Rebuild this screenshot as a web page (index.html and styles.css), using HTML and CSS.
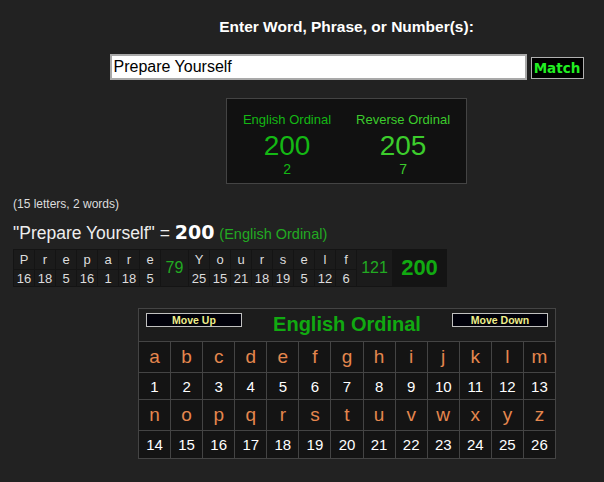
FILE: index.html
```html
<!DOCTYPE html>
<html>
<head>
<meta charset="utf-8">
<link rel="stylesheet" href="styles.css">
</head>
<body>
<div class="center">
  <div class="prompt">Enter Word, Phrase, or Number(s):</div>
  <div class="form-row">
    <input class="phrase" type="text" value="Prepare Yourself">
    <button class="match">Match</button>
  </div>
  <div class="results">
    <div class="res-col eo">
      <div class="res-label">English Ordinal</div>
      <div class="res-num">200</div>
      <div class="res-red">2</div>
    </div>
    <div class="res-col ro">
      <div class="res-label">Reverse Ordinal</div>
      <div class="res-num">205</div>
      <div class="res-red">7</div>
    </div>
  </div>
</div>

<div class="breakdown-area">
  <div class="counts">(15 letters, 2 words)</div>
  <div class="equation">"Prepare Yourself" = <span class="eq-num">200</span> <span class="eq-cipher">(English Ordinal)</span></div>
  <table class="breakdown">
    <tr class="lt">
      <td class="c">P</td><td class="c">r</td><td class="c">e</td><td class="c">p</td><td class="c">a</td><td class="c">r</td><td class="c">e</td>
      <td class="sum s1" rowspan="2">79</td>
      <td class="c">Y</td><td class="c">o</td><td class="c">u</td><td class="c">r</td><td class="c">s</td><td class="c">e</td><td class="c">l</td><td class="c">f</td>
      <td class="sum s2" rowspan="2">121</td>
      <td class="total" rowspan="2">200</td>
    </tr>
    <tr class="nm">
      <td>16</td><td>18</td><td>5</td><td>16</td><td>1</td><td>18</td><td>5</td>
      <td>25</td><td>15</td><td>21</td><td>18</td><td>19</td><td>5</td><td>12</td><td>6</td>
    </tr>
  </table>
</div>

<div class="cipher-wrap">
  <div class="cipher">
    <div class="cipher-head">
      <button class="move">Move Up</button>
      <div class="cipher-title">English Ordinal</div>
      <button class="move">Move Down</button>
    </div>
    <div class="grid">
      <div class="gl">a</div><div class="gl">b</div><div class="gl">c</div><div class="gl">d</div><div class="gl">e</div><div class="gl">f</div><div class="gl">g</div><div class="gl">h</div><div class="gl">i</div><div class="gl">j</div><div class="gl">k</div><div class="gl">l</div><div class="gl">m</div>
      <div class="gn">1</div><div class="gn">2</div><div class="gn">3</div><div class="gn">4</div><div class="gn">5</div><div class="gn">6</div><div class="gn">7</div><div class="gn">8</div><div class="gn">9</div><div class="gn">10</div><div class="gn">11</div><div class="gn">12</div><div class="gn">13</div>
      <div class="gl">n</div><div class="gl">o</div><div class="gl">p</div><div class="gl">q</div><div class="gl">r</div><div class="gl">s</div><div class="gl">t</div><div class="gl">u</div><div class="gl">v</div><div class="gl">w</div><div class="gl">x</div><div class="gl">y</div><div class="gl">z</div>
      <div class="gn">14</div><div class="gn">15</div><div class="gn">16</div><div class="gn">17</div><div class="gn">18</div><div class="gn">19</div><div class="gn">20</div><div class="gn">21</div><div class="gn">22</div><div class="gn">23</div><div class="gn">24</div><div class="gn">25</div><div class="gn">26</div>
    </div>
  </div>
</div>
</body>
</html>
```
FILE: styles.css
```css
html, body {
  margin: 0;
  padding: 0;
  background: #222222;
  font-family: "Liberation Sans", Arial, sans-serif;
  color: #dddddd;
}
body {
  padding-top: 18px;
  width: 604px;
  height: 482px;
  overflow: hidden;
  box-sizing: border-box;
}
.center {
  margin-left: 89px;
  width: 515px;
  display: flex;
  flex-direction: column;
  align-items: center;
}
.prompt {
  font-size: 15.5px;
  line-height: 18px;
  font-weight: bold;
  color: #ffffff;
}
.form-row {
  margin-top: 18px;
  display: flex;
  align-items: center;
  gap: 4px;
}
.phrase {
  width: 417px;
  height: 26px;
  box-sizing: border-box;
  margin: 0;
  border: 2px solid #a9a9a9;
  padding: 0 2px;
  background: #ffffff;
  color: #000000;
  font-family: "Liberation Sans", Arial, sans-serif;
  font-size: 16px;
  outline: none;
}
.match {
  width: 53px;
  height: 22px;
  box-sizing: border-box;
  margin: 2px 0 0 0;
  padding: 0;
  background: #000000;
  border: 1px solid #b0b0b0;
  color: #22ee22;
  font-family: "DejaVu Sans", Verdana, sans-serif;
  font-weight: bold;
  font-size: 13.5px;
  line-height: 18px;
}
.results {
  margin-top: 18px;
  width: 241px;
  box-sizing: border-box;
  border: 1px solid #444444;
  background: #111111;
  padding: 13px 0 6px 0;
  display: flex;
  justify-content: center;
  gap: 25px;
}
.res-col {
  display: flex;
  flex-direction: column;
  align-items: center;
}
.eo { color: #14b814; }
.ro { color: #3ccc2c; }
.res-label {
  font-size: 13px;
  line-height: 15px;
}
.res-num {
  margin-top: 3px;
  font-size: 28px;
  line-height: 31px;
}
.res-red {
  font-size: 14px;
  line-height: 16px;
}
.breakdown-area {
  margin-left: 13px;
  margin-top: 13px;
}
.counts {
  font-size: 12px;
  line-height: 14px;
  color: #dddddd;
}
.equation {
  margin-top: 12px;
  height: 20px;
  font-size: 17.5px;
  line-height: 20px;
  color: #eeeeee;
  white-space: nowrap;
}
.eq-num {
  font-family: "DejaVu Sans", Verdana, sans-serif;
  font-weight: bold;
  font-size: 19px;
  line-height: 1;
  color: #ffffff;
}
.eq-cipher {
  font-size: 14.5px;
  line-height: 1;
  color: #22aa22;
}
.breakdown {
  margin-top: 6px;
  width: 434px;
  table-layout: fixed;
  border-collapse: separate;
  border-spacing: 1px;
  background: #141414;
}
.breakdown td {
  padding: 0;
  text-align: center;
  background: #1b1b1b;
  color: #dddddd;
  font-size: 13px;
  line-height: 15px;
}
.breakdown td.c { width: 20px; }
.breakdown tr.lt { height: 19px; }
.breakdown tr.nm { height: 16px; }
.breakdown td.sum {
  color: #22aa22;
  font-size: 16px;
  line-height: 18px;
}
.breakdown td.s1 { width: 27px; }
.breakdown td.s2 { width: 35px; }
.breakdown td.total {
  width: 53px;
  background: #141414;
  color: #11aa11;
  font-weight: bold;
  font-size: 22px;
  line-height: 24px;
}
.cipher-wrap {
  margin-top: 21px;
  margin-left: 138px;
}
.cipher {
  width: 418px;
  box-sizing: border-box;
  border: 1px solid #444444;
  background: #1c1c1c;
}
.cipher-head {
  height: 32px;
  box-sizing: border-box;
  padding: 4px 7px 0 7px;
  display: flex;
  align-items: flex-start;
}
.move {
  width: 96px;
  height: 14px;
  box-sizing: border-box;
  margin: 0;
  padding: 0;
  background: #00000a;
  border: 1px solid #c0c0c0;
  color: #eeee8a;
  font-family: "Liberation Sans", Arial, sans-serif;
  font-weight: bold;
  font-size: 10.5px;
  line-height: 12px;
}
.cipher-title {
  flex: 1;
  text-align: center;
  font-size: 20px;
  line-height: 23px;
  font-weight: bold;
  color: #11aa11;
}
.grid {
  display: grid;
  grid-template-columns: repeat(13, 1fr);
  grid-template-rows: 30px 26px 30px 27px;
  gap: 1px;
  background: #444444;
  border-top: 1px solid #444444;
}
.gl, .gn {
  background: #141414;
  display: flex;
  align-items: center;
  justify-content: center;
}
.gl {
  color: #e5874e;
  font-size: 19px;
}
.gn {
  color: #ffffff;
  font-size: 15px;
}
```
